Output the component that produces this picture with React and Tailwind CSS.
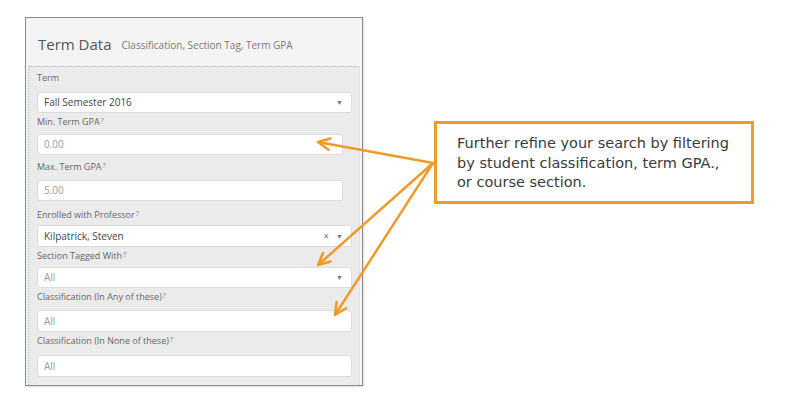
import React from "react";

const ORANGE = "#f19a2a";

function Label({ text, q = true, className = "" }) {
  return (
    <div className={"h-[12px] leading-[12px] text-[9px] text-[#666] " + className}>
      {text}
      {q && <sup className="text-[7.5px] text-[#888] ml-[1px] relative -top-[2px]">?</sup>}
    </div>
  );
}

function Field({ value, muted, select, clear, className = "", h = "h-[21px]" }) {
  return (
    <div
      className={
        "flex items-center bg-white border border-[#dcdcdc] rounded-[3px] pl-[6px] pr-[8px] " + h + " " + className
      }
    >
      <span className={"flex-1 text-[10px] " + (muted ? "text-[#9a9a9a]" : "text-[#444]")}>{value}</span>
      {clear && <span className="text-[10px] text-[#777] mr-[7px] leading-none">×</span>}
      {select && <span className="text-[7px] text-[#777] leading-none">▼</span>}
    </div>
  );
}

function arrow(x1, y1, x2, y2) {
  const a = Math.atan2(y1 - y2, x1 - x2);
  const len = 13;
  const s = 0.45;
  const p1 = [x2 + len * Math.cos(a + s), y2 + len * Math.sin(a + s)];
  const p2 = [x2 + len * Math.cos(a - s), y2 + len * Math.sin(a - s)];
  return `M${x1} ${y1} L${x2} ${y2} M${p1[0]} ${p1[1]} L${x2} ${y2} L${p2[0]} ${p2[1]}`;
}

export default function App() {
  return (
    <div
      className="relative w-[800px] h-[397px] bg-white overflow-hidden flex items-start pl-[25px] pt-[17px]"
      style={{ fontFamily: '"Open Sans", "Noto Sans", sans-serif' }}
    >
      {/* panel */}
      <div className="w-[338px] h-[369px] border border-[#8a8a8a] bg-[#f4f4f4] flex flex-col shadow-[1px_1px_2px_rgba(0,0,0,0.15)]">
        <div className="h-[48px] flex items-center pl-[12px] gap-[10px] pt-[4px]">
          <span className="text-[15px] text-[#555]">Term Data</span>
          <span className="text-[10px] text-[#7a7a7a] pt-[3px]">Classification, Section Tag, Term GPA</span>
        </div>
        <div className="flex-1 mx-[2px] border-t border-l border-r border-dotted border-t-[#8fb2d4] border-l-[#a9c3dd] border-r-[#d8d8d8] bg-[#ebebeb] pt-[5px] pl-[8px] pr-[7px]">
          <Label text="Term" q={false} />
          <Field value="Fall Semester 2016" select className="mt-[8px]" />
          <Label text="Min. Term GPA" className="mt-[3px]" />
          <Field value="0.00" muted className="mt-[6px] mr-[9px]" />
          <Label text="Max. Term GPA" className="mt-[6px]" />
          <Field value="5.00" muted className="mt-[7px] mr-[9px]" />
          <Label text="Enrolled with Professor" className="mt-[8px]" />
          <Field value="Kilpatrick, Steven" select clear className="mt-[4px]" h="h-[22px]" />
          <Label text="Section Tagged With" className="mt-[3px]" />
          <Field value="All" muted select className="mt-[5px]" />
          <Label text="Classification (In Any of these)" className="mt-[3px]" />
          <Field value="All" muted className="mt-[7px]" h="h-[22px]" />
          <Label text="Classification (In None of these)" className="mt-[3px]" />
          <Field value="All" muted className="mt-[8px]" h="h-[22px]" />
        </div>
      </div>

      {/* callout */}
      <div
        className="ml-[71px] mt-[104px] w-[320px] h-[83px] border-[3px] border-[#f19a2a] pl-[20px] pt-[10px] text-[14.5px] leading-[19.5px] text-[#3a3a3a] whitespace-nowrap"
        style={{ fontFamily: '"DejaVu Sans", Verdana, sans-serif' }}
      >
        Further refine your search by filtering
        <br />
        by student classification, term GPA.,
        <br />
        or course section.
      </div>

      {/* annotation arrows */}
      <svg className="absolute inset-0 pointer-events-none" width="800" height="397">
        <g stroke={ORANGE} strokeWidth="2.5" fill="none" strokeLinecap="round" strokeLinejoin="round">
          <path d={arrow(433, 163, 318, 142)} />
          <path d={arrow(433, 163, 318, 265)} />
          <path d={arrow(433, 163, 335, 315)} />
        </g>
      </svg>
    </div>
  );
}
